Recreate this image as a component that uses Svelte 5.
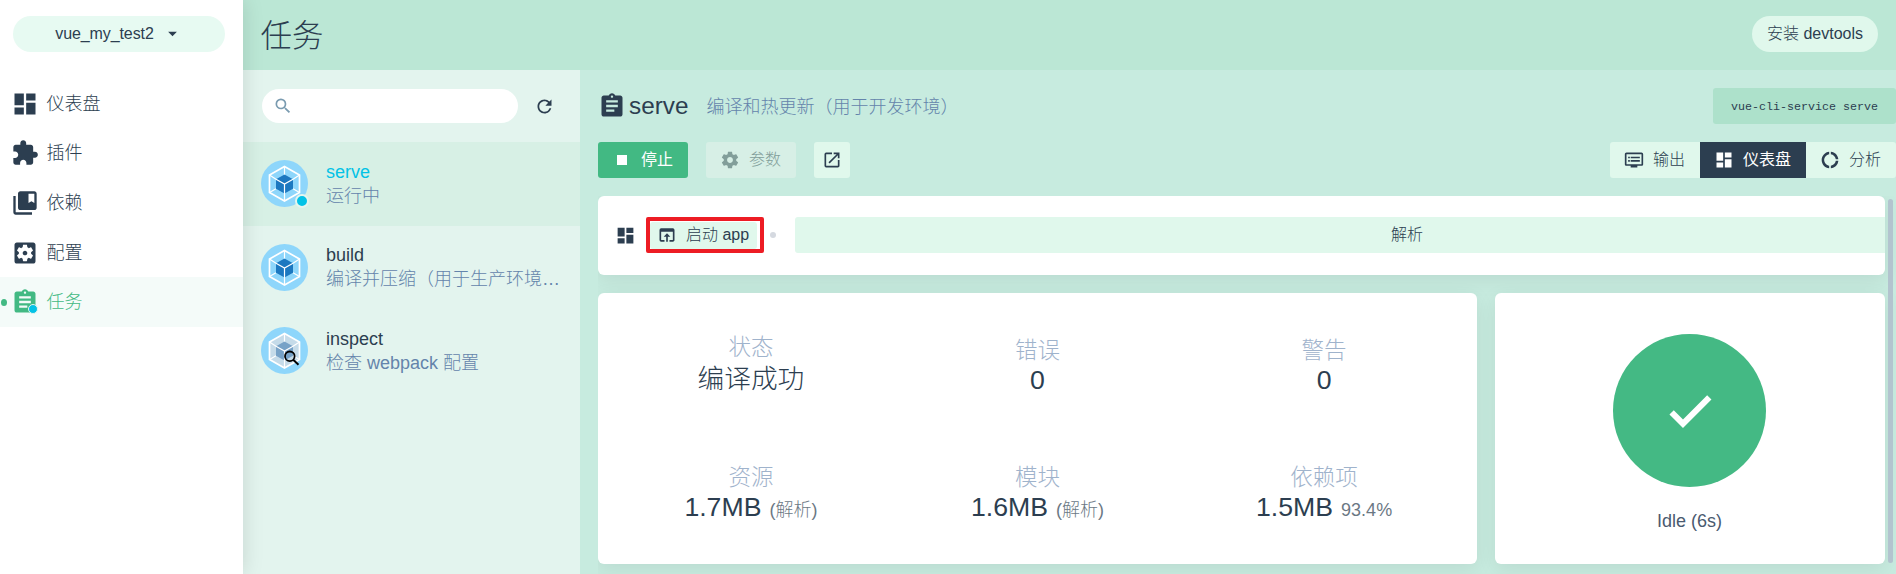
<script>
  const icons = {
    dashboard: 'M3 13h8V3H3v10zm0 8h8v-6H3v6zm10 0h8V11h-8v10zm0-18v6h8V3h-8z',
    plugin: 'M20.5 11H19V7c0-1.1-.9-2-2-2h-4V3.5C13 2.12 11.88 1 10.5 1S8 2.12 8 3.5V5H4c-1.1 0-1.99.9-1.99 2v3.8H3.5c1.49 0 2.7 1.21 2.7 2.7s-1.21 2.7-2.7 2.7H2V20c0 1.1.9 2 2 2h3.8v-1.5c0-1.49 1.21-2.7 2.7-2.7 1.49 0 2.7 1.21 2.7 2.7V22H17c1.1 0 2-.9 2-2v-4h1.500c1.38 0 2.5-1.12 2.5-2.5S21.88 11 20.5 11z',
    collections: 'M4 6H2v14c0 1.100.9 2 2 2h14v-2H4V6zM20 2H8c-1.100 0-2 .9-2 2v12c0 1.100.9 2 2 2h12c1.100 0 2-.9 2-2V4c0-1.100-.9-2-2-2zm0 10l-2.500-1.500L15 12V4h5v8z',
    config: 'M12 10c-1.100 0-2 .9-2 2s.9 2 2 2 2-.9 2-2-.9-2-2-2zm7-7H5c-1.110 0-2 .9-2 2v14c0 1.100.89 2 2 2h14c1.110 0 2-.9 2-2V5c0-1.100-.89-2-2-2zm-1.750 9c0 .23-.02.46-.05.68l1.480 1.160c.13.11.17.3.08.45l-1.400 2.420c-.09.15-.27.21-.43.15l-1.740-.7c-.36.28-.76.51-1.180.69l-.26 1.850c-.03.17-.18.3-.35.3h-2.800c-.17 0-.32-.13-.35-.29l-.26-1.850c-.43-.18-.82-.41-1.180-.69l-1.740.7c-.16.06-.34 0-.43-.15l-1.400-2.420c-.09-.15-.05-.34.08-.45l1.480-1.160c-.03-.23-.05-.46-.05-.69s.02-.46.05-.68l-1.480-1.160c-.13-.11-.17-.3-.08-.45l1.400-2.420c.09-.15.27-.21.43-.15l1.740.7c.36-.28.76-.51 1.180-.69l.26-1.850c.03-.17.18-.3.35-.3h2.800c.17 0 .32.13.35.29l.26 1.850c.43.18.82.41 1.180.69l1.740-.7c.16-.06.34 0 .43.15l1.400 2.420c.09.15.05.34-.08.45l-1.480 1.160c.03.23.05.46.05.69z',
    tasks: 'M19 3h-4.180C14.400 1.840 13.300 1 12 1c-1.300 0-2.400.84-2.820 2H5c-1.100 0-2 .9-2 2v14c0 1.100.9 2 2 2h14c1.100 0 2-.9 2-2V5c0-1.100-.9-2-2-2zm-7 0c.55 0 1 .45 1 1s-.45 1-1 1-1-.45-1-1 .45-1 1-1zm2 14H7v-2h7v2zm3-4H7v-2h10v2zm0-4H7V7h10v2z',
    search: 'M15.500 14h-.79l-.28-.27A6.471 6.471 0 0 0 16 9.500 6.500 6.500 0 1 0 9.500 16c1.610 0 3.090-.59 4.230-1.570l.27.28v.79l5 4.990L20.490 19l-4.990-5zm-6 0C7.010 14 5 11.990 5 9.500S7.010 5 9.500 5 14 7.010 14 9.500 11.990 14 9.500 14z',
    refresh: 'M17.650 6.350A7.958 7.958 0 0 0 12 4c-4.420 0-7.990 3.580-7.990 8s3.570 8 7.990 8c3.730 0 6.840-2.550 7.730-6h-2.080A5.990 5.990 0 0 1 12 18c-3.310 0-6-2.690-6-6s2.690-6 6-6c1.660 0 3.140.69 4.220 1.780L13 11h7V4l-2.350 2.350z',
    stop: 'M6 6h12v12H6z',
    gear: 'M19.430 12.980c.04-.32.07-.64.07-.98s-.03-.66-.07-.98l2.110-1.650c.19-.15.24-.42.12-.64l-2-3.460c-.12-.22-.39-.3-.61-.22l-2.490 1c-.52-.4-1.080-.73-1.690-.98l-.38-2.650C14.460 2.180 14.250 2 14 2h-4c-.25 0-.46.18-.49.42l-.38 2.650c-.61.25-1.170.59-1.690.98l-2.490-1c-.23-.09-.49 0-.61.22l-2 3.460c-.13.22-.07.49.12.64l2.110 1.650c-.04.32-.07.65-.07.98s.03.66.07.98l-2.110 1.650c-.19.15-.24.42-.12.64l2 3.460c.12.22.39.3.61.22l2.490-1c.52.4 1.080.73 1.690.98l.38 2.650c.03.24.24.42.49.42h4c.25 0 .46-.18.49-.42l.38-2.650c.61-.25 1.170-.59 1.690-.98l2.490 1c.23.09.49 0 .61-.22l2-3.460c.12-.22.07-.49-.12-.64l-2.110-1.650zM12 15.500c-1.930 0-3.500-1.570-3.500-3.500s1.570-3.500 3.500-3.500 3.500 1.570 3.500 3.500-1.570 3.500-3.500 3.500z',
    external: 'M19 19H5V5h7V3H5a2 2 0 0 0-2 2v14a2 2 0 0 0 2 2h14c1.100 0 2-.9 2-2v-7h-2v7zM14 3v2h3.590l-9.830 9.830 1.410 1.410L19 6.410V10h2V3h-7z',
    output: 'M21 3H3c-1.100 0-2 .9-2 2v12c0 1.100.9 2 2 2h5v2h8v-2h5c1.100 0 1.990-.9 1.990-2L23 5c0-1.100-.9-2-2-2zm0 14H3V5h18v12zm-2-9H8v2h11V8zm0 4H8v2h11v-2zM7 8H5v2h2V8zm0 4H5v2h2v-2z',
    donut: 'M11 5.080V2c-5 .5-9 4.810-9 10s4 9.500 9 10v-3.080c-3-.48-6-3.400-6-6.920s3-6.440 6-6.920zM18.970 11H22c-.47-5-4-8.530-9-9v3.080C16 5.510 18.540 8 18.970 11zM13 18.920V22c5-.47 8.530-4 9-9h-3.030c-.43 3-2.970 5.490-5.970 5.920z',
    open: 'M19 4H5a2 2 0 0 0-2 2v12a2 2 0 0 0 2 2h4v-2H5V8h14v10h-4v2h4c1.100 0 2-.9 2-2V6a2 2 0 0 0-2-2zm-7 6l-4 4h3v6h2v-6h3l-4-4z',
    check: 'M9 15.600L5.050 11.650L3.200 13.500L9 19.300L21.200 7.100L19.350 5.250z',
    caret: 'M7 10l5 5 5-5z'
  };

  const nav = [
    { label: '仪表盘', icon: 'dashboard' },
    { label: '插件', icon: 'plugin' },
    { label: '依赖', icon: 'collections' },
    { label: '配置', icon: 'config' },
    { label: '任务', icon: 'tasks', active: true }
  ];

  const tasks = [
    { name: 'serve', desc: '运行中', active: true },
    { name: 'build', desc: '编译并压缩（用于生产环境…' },
    { name: 'inspect', desc: '检查 webpack 配置', inspect: true }
  ];

  const stats = [
    { label: '状态', value: '编译成功', cjk: true },
    { label: '错误', value: '0' },
    { label: '警告', value: '0' },
    { label: '资源', value: '1.7MB', note: '(解析)' },
    { label: '模块', value: '1.6MB', note: '(解析)' },
    { label: '依赖项', value: '1.5MB', note: '93.4%' }
  ];
</script>

{#snippet icon(name, size)}
  <svg class="icon" width={size} height={size} viewBox="0 0 24 24"><path d={icons[name]} /></svg>
{/snippet}

<div class="app">
  <aside class="sidebar">
    <button class="project"><span>vue_my_test2</span>{@render icon('caret', 21)}</button>
    <nav>
      {#each nav as item}
        <a class="nav-item" class:active={item.active}>
          <span class="nav-icon">
            {@render icon(item.icon, 28)}
            {#if item.active}<i class="badge"></i>{/if}
          </span>
          <span>{item.label}</span>
        </a>
      {/each}
    </nav>
  </aside>

  <main>
    <header>
      <h1>任务</h1>
      <button class="devtools">安装 devtools</button>
    </header>

    <div class="body">
      <section class="list">
        <div class="search-row">
          <div class="search">{@render icon('search', 20)}</div>
          {@render icon('refresh', 21)}
        </div>
        {#each tasks as task}
          <div class="task" class:active={task.active}>
            <div class="logo">
              <svg width="47" height="47" viewBox="0 0 47 47">
                <circle cx="23.500" cy="23.500" r="23.500" fill="#8ed6fb" />
                <g class:faded={task.inspect}>
                  <path class="shell" d="M23.500 6.500L38.500 15v17.500l-15 8.500-15-8.500V15z" />
                  <path class="core" d="M23.500 14.500l8.500 4.700v9.600l-8.500 4.800-8.500-4.800v-9.600z" />
                </g>
                <path class="wire" d="M23.500 6.500L38.500 15v17.500l-15 8.500-15-8.500V15z" />
                <path class="thin" d="M23.500 6.500v8M38.500 15L32 19.200M38.500 32.500L32 28.800M23.500 41V24M8.500 32.500l6.500-3.700M8.500 15l6.500 4.200M15 19.200l8.500 4.800 8.500-4.800" />
                {#if task.inspect}
                  <circle cx="28.800" cy="29.300" r="4.800" fill="none" stroke="#000" stroke-width="1.800" />
                  <path d="M32.200 32.700l5.300 5" stroke="#000" stroke-width="2" />
                {/if}
              </svg>
              {#if task.active}<i class="badge"></i>{/if}
            </div>
            <div class="task-text">
              <div class="name">{task.name}</div>
              <div class="desc">{task.desc}</div>
            </div>
          </div>
        {/each}
      </section>

      <section class="content">
        <div class="title-row">
          {@render icon('tasks', 28)}
          <h2>serve</h2>
          <p>编译和热更新（用于开发环境）</p>
          <code>vue-cli-service serve</code>
        </div>

        <div class="toolbar">
          <button class="btn primary">{@render icon('stop', 20)}停止</button>
          <button class="btn disabled">{@render icon('gear', 20)}参数</button>
          <button class="btn square">{@render icon('external', 20)}</button>
          <div class="tabs">
            <button class="btn">{@render icon('output', 20)}输出</button>
            <button class="btn selected">{@render icon('dashboard', 20)}仪表盘</button>
            <button class="btn">{@render icon('donut', 20)}分析</button>
          </div>
        </div>

        <div class="view">
          <div class="panel actions">
            {@render icon('dashboard', 21)}
            <div class="marked"><button class="btn launch">{@render icon('open', 20)}启动 app</button></div>
            <i class="dot"></i>
            <div class="parse">解析</div>
          </div>
          <div class="cards">
            <div class="panel stats">
              {#each stats as stat}
                <div class="stat" class:cjk={stat.cjk}>
                  <div class="label">{stat.label}</div>
                  <div class="value">{stat.value}{#if stat.note}<small>{stat.note}</small>{/if}</div>
                </div>
              {/each}
            </div>
            <div class="panel progress">
              <div class="circle">{@render icon('check', 56)}</div>
              <div class="idle">Idle (6s)</div>
            </div>
          </div>
          <i class="scrollbar"></i>
        </div>
      </section>
    </div>
  </main>
</div>

<style>
  :global(body) { overflow: hidden; }
  .app, .app :global(*) { box-sizing: border-box; }
  .app {
    display: flex;
    width: 1896px;
    height: 574px;
    overflow: hidden;
    color: #2c3e50;
    font: 300 18px/24px "Liberation Sans", "Noto Sans CJK SC", sans-serif;
    white-space: nowrap;
  }
  h1, h2, p { margin: 0; font-weight: 300; }
  button { border: 0; font: inherit; color: inherit; }
  .icon { fill: currentColor; flex: none; display: block; }

  .sidebar {
    position: relative;
    z-index: 1;
    width: 243px;
    flex: none;
    padding-top: 16px;
    background: #fff;
    box-shadow: 0 0 20px rgba(0, 0, 0, .13);
  }
  .project {
    display: flex;
    align-items: center;
    justify-content: center;
    gap: 8px;
    width: 212px;
    height: 36px;
    margin: 0 0 27px 13px;
    padding: 0 0 1px;
    border-radius: 18px;
    background: #e7faf2;
    font-size: 16px;
    letter-spacing: -.1px;
  }
  .nav-item { display: flex; align-items: center; gap: 8px; height: 49.6px; padding-left: 10.500px; }
  .nav-item.active { color: #42b983; background: #f4fbf9; position: relative; }
  .nav-item.active::before {
    content: "";
    position: absolute;
    left: 1px;
    top: 21.500px;
    width: 6px;
    height: 7px;
    border-radius: 50%;
    background: #42b983;
  }
  .nav-icon { position: relative; }
  .badge {
    position: absolute;
    width: 14px;
    height: 14px;
    border: 2px solid #e4f5ef;
    border-radius: 50%;
    background: #03c2e6;
  }
  .nav-icon .badge { width: 10px; height: 10px; right: 1px; bottom: 2px; border-width: 1px; }

  main { flex: 1; min-width: 0; display: flex; flex-direction: column; }
  header {
    display: flex;
    align-items: center;
    justify-content: space-between;
    height: 70px;
    padding: 0 18px 0 17.500px;
    background: #bbe7d5;
  }
  h1 { font-size: 31.500px; line-height: 36px; padding-top: 1px; }
  .devtools { width: 126px; height: 36px; margin-top: -2px; padding: 0; border-radius: 18px; background: #e0f8ec; font-size: 16px; }
  .body { flex: 1; min-height: 0; display: flex; }

  .list { width: 337px; flex: none; background: #e3f4ee; }
  .search-row { display: flex; align-items: center; gap: 15.500px; height: 72px; padding-left: 19px; }
  .search { display: flex; align-items: center; width: 256px; height: 34px; padding-left: 11px; border-radius: 17px; background: #fff; color: #7a9bb0; }
  .task { display: flex; align-items: center; gap: 18px; height: 83.5px; padding: 0 18px; }
  .task.active { background: #d7f0e5; }
  .logo { position: relative; width: 47px; height: 47px; }
  .logo svg { display: block; }
  .logo .badge { right: -1px; bottom: -1px; }
  .shell { fill: #8ed6fb; }
  .core { fill: #1c78c0; }
  .faded .shell { fill: #c5dbe9; }
  .faded .core { fill: #77a2c7; }
  .wire { fill: none; stroke: #fff; stroke-width: 1.700; }
  .thin { fill: none; stroke: #fff; stroke-width: 1.200; }
  .task-text { min-width: 0; flex: 1; }
  .task.active .name { color: #03c2e6; }
  .desc { color: #6484ab; overflow: hidden; text-overflow: ellipsis; }

  .content { flex: 1; min-width: 0; display: flex; flex-direction: column; padding: 18px 0 0 18px; background: #c7ebdf; }
  .title-row { display: flex; align-items: center; height: 36px; }
  h2 { font-size: 24.300px; margin-left: 3px; }
  .title-row p { color: #6484ab; margin: 2px 0 0 18px; }
  code {
    margin-left: auto;
    width: 183px;
    height: 36px;
    padding-left: 18px;
    border-radius: 3px;
    background: #ade1cb;
    font: 400 11.67px/39px "Liberation Mono", monospace;
  }
  .toolbar { display: flex; gap: 18px; margin: 18px 0; }
  .btn {
    display: flex;
    align-items: center;
    gap: 9px;
    height: 36px;
    padding: 0 15px 0 14px;
    border-radius: 3px;
    background: #e0f8ec;
    font-size: 16px;
  }
  .primary { background: #42b983; color: #fff; font-weight: 400; }
  .disabled { background: #d7efe6; color: #829e9a; }
  .square { padding: 0 8px; }
  .tabs { display: flex; margin-left: auto; border-radius: 3px; overflow: hidden; }
  .tabs .btn { border-radius: 0; }
  .tabs .selected { background: #2c3e50; color: #fff; font-weight: 400; }

  .view { position: relative; flex: 1; overflow: hidden; }
  .panel { background: #fff; border-radius: 6px; box-shadow: 0 5px 20px rgba(0, 0, 0, .07); }
  .actions { display: flex; align-items: center; width: 1287px; height: 79px; padding: 0 0 1px 17px; overflow: hidden; }
  .marked {
    display: flex;
    align-items: center;
    width: 118px;
    height: 36px;
    margin: 0 6px 0 10px;
    border: 4px solid #ed1c24;
    border-radius: 2px;
  }
  .launch { width: 107px; height: 27px; padding: 0 0 0 7px; }
  .dot { width: 6px; height: 6px; border-radius: 50%; background: #d5d9e0; }
  .parse { flex: 1; height: 36px; margin-left: 19px; padding-left: 134px; border-radius: 3px 0 0 3px; background: #e0f8ec; font-size: 16px; line-height: 36px; text-align: center; }
  .cards { display: flex; gap: 18px; margin-top: 18px; }
  .stats { display: grid; grid-template-columns: repeat(3, 286.6px); grid-template-rows: 127px 127px; row-gap: 2px; justify-content: center; align-content: start; width: 879px; height: 271px; padding-top: 8.500px; }
  .stat { display: flex; flex-direction: column; align-items: center; justify-content: center; }
  .label { color: #9fb3cc; font-size: 22.500px; line-height: 29px; }
  .value { font-size: 26.670px; line-height: 30px; }
  .cjk .value { line-height: 35px; }
  small { margin-left: 8px; font-size: 18px; opacity: .7; }
  .progress { display: flex; flex-direction: column; align-items: center; width: 390px; height: 271px; padding: 41px 1px 0 0; }
  .circle { display: flex; align-items: center; justify-content: center; width: 153px; height: 153px; border-radius: 50%; background: #44b984; color: #fff; }
  .idle { margin-top: 22px; color: #4a5a70; }
  .scrollbar { position: absolute; right: 3px; top: 3px; width: 5px; height: 364px; border-radius: 3px; background: #b3c4cf; }
</style>
